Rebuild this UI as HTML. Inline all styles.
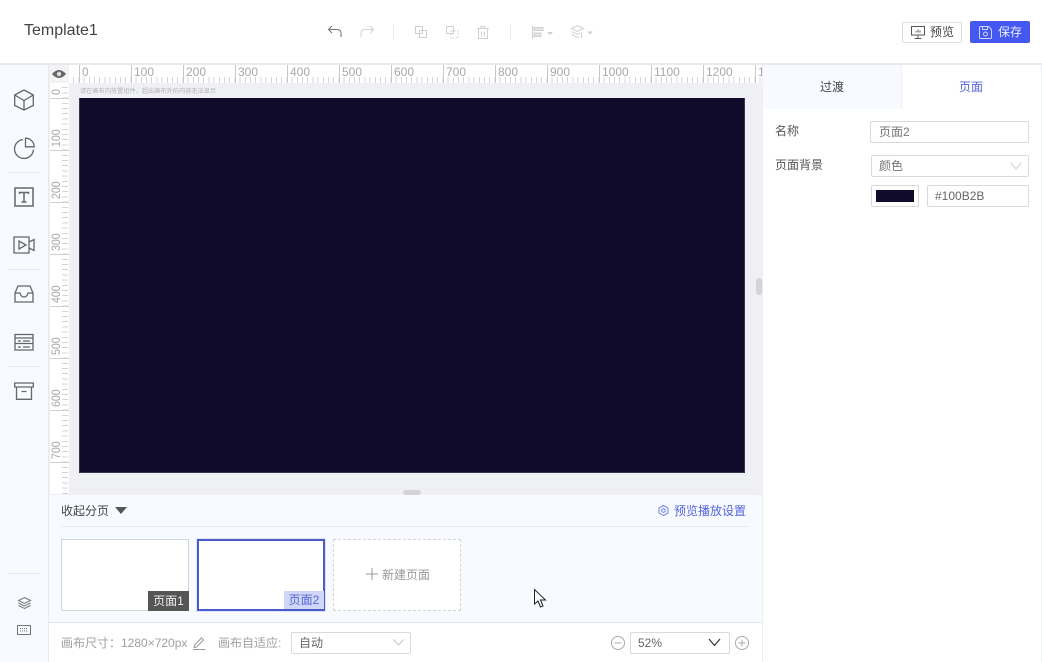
<!DOCTYPE html>
<html><head><meta charset="utf-8"><style>
*{box-sizing:border-box}
html,body{margin:0;padding:0;width:1042px;height:662px;overflow:hidden;background:#fff;font-family:"Liberation Sans","Noto Sans CJK SC",sans-serif;font-size:12px;color:#333}
.a{position:absolute}
.t{position:absolute;white-space:nowrap;line-height:16px}
svg{position:absolute;overflow:visible}
.box{position:absolute;background:#fff;border:1px solid #d9d9de;border-radius:2px}
.hl{position:absolute;left:8px;width:32px;height:1px;background:#e6e8ee}
.rh{position:absolute;top:0;font-size:12px;color:#a8a8a8;line-height:14px;padding-left:2px;height:18px;width:52px;border-left:1px solid #c8c8c8}
.rv{position:absolute;left:0;font-size:12px;color:#a8a8a8;line-height:12px;white-space:nowrap;transform-origin:0 0;transform:rotate(-90deg) scaleX(.88)}
.rvl{position:absolute;left:0;width:19px;height:1px;background:#d0d0d0}
</style></head><body>
<!-- header -->
<div class="a" style="left:0;top:0;width:1042px;height:65px;background:#fff;border-bottom:2px solid #e8e9ec"></div>
<div class="t" style="left:24px;top:22px;font-size:16px;line-height:18px;color:#444">Template1</div>
<svg style="left:327px;top:24px" width="16" height="16" fill="none" stroke="#777" stroke-width="1.100"><path d="M5 2 1.500 5.500 5 9M1.500 5.500H10Q14 5.500 14 9.500V13"/></svg>
<svg style="left:359px;top:24px" width="16" height="16" fill="none" stroke="#d4d4d4" stroke-width="1.100"><path d="M11 2 14.500 5.500 11 9M14.500 5.500H6Q2 5.500 2 9.500V13"/></svg>
<div class="a" style="left:393px;top:24px;width:1px;height:16px;background:#eeeeee"></div>
<svg style="left:415px;top:26px" width="12" height="12" fill="none" stroke="#cfcfcf"><path d="M.5.500h7v7h-7zM4.500 4.500h7v7h-7z"/></svg>
<svg style="left:446px;top:26px" width="13" height="13" fill="none" stroke="#cfcfcf"><path d="M.5.500h7v7h-7z"/><path d="M5 5h7v7H5z" stroke-dasharray="1.500 1.500"/></svg>
<svg style="left:477px;top:26px" width="12" height="13" fill="none" stroke="#cfcfcf"><path d="M0 2.500h12M4 2.500V.5h4v2M1.500 2.500v10h9v-10M4.500 5.500v5M7.500 5.500v5"/></svg>
<div class="a" style="left:510px;top:24px;width:1px;height:16px;background:#eeeeee"></div>
<svg style="left:532px;top:26px" width="22" height="14" fill="none" stroke="#d0d0d0"><path d="M.5 0v13"/><path d="M2 1.500h9v3H2zM2 7h7v3.500H2z" fill="#e4e4e4"/><path d="M15 6h6l-3 3z" fill="#cfcfcf" stroke="none"/></svg>
<svg style="left:571px;top:25px" width="22" height="15" fill="none" stroke="#d0d0d0"><path d="M6.500.5 12.500 3.500 6.500 6.500.5 3.500zM.5 6.500 6.500 9.500 9 8.500M.5 9.500 6.500 12.500 8 12M10.500 7v6"/><path d="M16 6.500h6l-3 3z" fill="#cfcfcf" stroke="none"/></svg>
<div class="box" style="left:902px;top:22px;width:60px;height:21px;border-color:#ddd"></div>
<svg style="left:911px;top:26px" width="15" height="13" fill="none" stroke="#555"><path d="M.5.500h13v8.500H.5zM7 9v3M3.500 12.500h7"/><path d="M5 6.500V5M7 6.500V3.500M9 6.500V4.500"/></svg>
<div class="t" style="left:930px;top:24px;color:#444">预览</div>
<div class="a" style="left:970px;top:21px;width:60px;height:22px;background:#4457f0;border-radius:2px"></div>
<svg style="left:979px;top:26px" width="13" height="13" fill="none" stroke="#cfd5ff"><path d="M1.500.5h8l3 3v8a1 1 0 0 1-1 1h-10a1 1 0 0 1-1-1v-10a1 1 0 0 1 1-1zM3.500.5v3h5v-3"/><circle cx="6.500" cy="8" r="2"/></svg>
<div class="t" style="left:998px;top:24px;color:#e8ebff">保存</div>

<!-- left sidebar -->
<div class="a" style="left:0;top:65px;width:49px;height:597px;background:#f7faff;border-right:1px solid #e8e9ee"></div>
<svg style="left:14px;top:89px" width="20" height="22" fill="none" stroke="#666" stroke-width="1.300"><path d="M10 1 19.300 6v10.500L10 21 .7 16.500V6zM.7 6 10 11.500 19.300 6M10 11.500V21"/></svg>
<svg style="left:14px;top:137px" width="21" height="21" fill="none" stroke="#666" stroke-width="1.300"><path d="M9 2.500A9.500 9.500 0 1 0 19.500 12.500"/><path d="M11.500 1.200V9.800H20.200A8.700 8.700 0 0 0 11.500 1.200z"/></svg>
<div class="hl" style="top:172px"></div>
<svg style="left:14px;top:187px" width="20" height="20" fill="none" stroke="#666" stroke-width="1.300"><path d="M1 1h18v18H1z" stroke-width="1.500"/><path d="M5.500 7V5.500h9V7M10 5.500V15M7.500 15h5" stroke-width="1.500"/></svg>
<svg style="left:13px;top:236px" width="22" height="18" fill="none" stroke="#666" stroke-width="1.300"><path d="M1 1h15v16H1zM16 6l5-2.500v11L16 12"/><path d="M6 5v8l7-4z"/></svg>
<div class="hl" style="top:269px"></div>
<svg style="left:14px;top:285px" width="20" height="18" fill="none" stroke="#666" stroke-width="1.300"><path d="M1 8 4 1h12l3 7v9H1zM1 8h5q1 4 4 4t4-4h5"/></svg>
<svg style="left:14px;top:333px" width="20" height="18" fill="none" stroke="#666" stroke-width="1.300"><path d="M1 5V1.500h18V5M1 5h18v5.500H1zM1 10.500h18V17H1zM4 8h3M9 8h7M4 14h3M9 14h7"/></svg>
<div class="hl" style="top:366px"></div>
<svg style="left:14px;top:382px" width="20" height="18" fill="none" stroke="#666" stroke-width="1.300"><path d="M.7 1h18.600v4H.7zM2.500 5V17.300h15V5M7.500 9.500h5"/></svg>
<div class="hl" style="top:573px"></div>
<svg style="left:18px;top:597px" width="13" height="13" fill="none" stroke="#777"><path d="M6.500.5 12.500 3.500 6.500 6.500.5 3.500zM.5 6 6.500 9 12.500 6M.5 8.500 6.500 11.500 12.500 8.500"/></svg>
<svg style="left:17px;top:625px" width="14" height="10" fill="none" stroke="#777"><path d="M.5.500h13v9H.5z"/><path d="M3 3.500h8M3 6h8" stroke-dasharray="1 1"/></svg>

<!-- canvas area -->
<div class="a" style="left:49px;top:65px;width:714px;height:430px;background:#eff0f4"></div>
<div class="a" style="left:49px;top:65px;width:20px;height:18px;background:#f3f3f5"></div>
<svg style="left:52px;top:69px" width="14" height="10"><path d="M0 5Q7-3 14 5 7 13 0 5z" fill="#666"/><circle cx="7" cy="5" r="2.200" fill="#ddd"/></svg>

<!-- horizontal ruler -->
<div class="a" style="left:69px;top:65px;width:693px;height:18px;background:#fff;overflow:hidden">
 <div class="a" style="left:0;top:12px;width:693px;height:6px;background:repeating-linear-gradient(90deg,transparent 0,transparent 4.200px,#d4d4d4 4.200px,#d4d4d4 5.200px)"></div>
 <div class="rh" style="left:10px">0</div><div class="rh" style="left:62px">100</div><div class="rh" style="left:114px">200</div><div class="rh" style="left:166px">300</div><div class="rh" style="left:218px">400</div><div class="rh" style="left:270px">500</div><div class="rh" style="left:322px">600</div><div class="rh" style="left:374px">700</div><div class="rh" style="left:426px">800</div><div class="rh" style="left:478px">900</div><div class="rh" style="left:530px">1000</div><div class="rh" style="left:582px">1100</div><div class="rh" style="left:634px">1200</div><div class="rh" style="left:686px">1300</div>
</div>
<!-- vertical ruler -->
<div class="a" style="left:50px;top:83px;width:19px;height:411px;background:#fff;overflow:hidden">
 <div class="a" style="left:12px;top:0;width:6px;height:411px;background:repeating-linear-gradient(180deg,transparent 0,transparent 4.200px,#d4d4d4 4.200px,#d4d4d4 5.200px)"></div>
 <div class="rvl" style="top:15px"></div><div class="rvl" style="top:67px"></div><div class="rvl" style="top:119px"></div><div class="rvl" style="top:171px"></div><div class="rvl" style="top:223px"></div><div class="rvl" style="top:275px"></div><div class="rvl" style="top:327px"></div><div class="rvl" style="top:379px"></div>
 <div class="rv" style="top:12px">0</div>
 <div class="rv" style="top:64px">100</div>
 <div class="rv" style="top:116px">200</div>
 <div class="rv" style="top:168px">300</div>
 <div class="rv" style="top:220px">400</div>
 <div class="rv" style="top:272px">500</div>
 <div class="rv" style="top:324px">600</div>
 <div class="rv" style="top:376px">700</div>
</div>
<div class="t" style="left:80px;top:87px;font-size:6.200px;line-height:9px;color:#b4b4b8">请在画布内放置组件，超出画布外的内容无法显示</div>
<div class="a" style="left:79px;top:98px;width:666px;height:375px;background:#100b2b;border:1px solid #3a3650;border-top:0"></div>
<div class="a" style="left:755px;top:83px;width:8px;height:412px;background:#f1f1f4"></div>
<div class="a" style="left:756px;top:278px;width:6px;height:17px;background:#d4d4d8;border-radius:3px"></div>
<div class="a" style="left:69px;top:489px;width:694px;height:6px;background:#f0f0f2"></div>
<div class="a" style="left:403px;top:490px;width:18px;height:5px;background:#d4d4d8;border-radius:3px"></div>

<!-- bottom panel -->
<div class="a" style="left:49px;top:495px;width:714px;height:128px;background:#f7faff;border-bottom:1px solid #e3e5ea"></div>
<div class="t" style="left:61px;top:503px;color:#444">收起分页</div>
<svg style="left:115px;top:507px" width="12" height="8"><path d="M0 0h12L6 7z" fill="#555"/></svg>
<svg style="left:658px;top:505px" width="11" height="11" fill="none" stroke="#6b7ae0"><path d="M5.500.5 10 3v5L5.500 10.500 1 8V3z"/><circle cx="5.500" cy="5.500" r="1.800"/></svg>
<div class="t" style="left:674px;top:503px;color:#5566d8">预览播放设置</div>
<div class="a" style="left:61px;top:526px;width:688px;height:1px;background:#e6e8ee"></div>
<div class="a" style="left:61px;top:539px;width:128px;height:72px;background:#fff;border:1px solid #d4d5da"></div>
<div class="t" style="left:148px;top:591px;width:41px;height:20px;background:#555;color:#eee;line-height:20px;text-align:center">页面1</div>
<div class="a" style="left:197px;top:539px;width:128px;height:72px;background:#fff;border:2px solid #4a5cc9;box-shadow:0 0 0 1px #dfe3fa"></div>
<div class="t" style="left:284px;top:591px;width:40px;height:18px;background:#d0d6f7;color:#5566d8;line-height:18px;text-align:center">页面2</div>
<div class="a" style="left:333px;top:539px;width:128px;height:72px;background:#fff;border:1px dashed #d4d4d8"></div>
<svg style="left:366px;top:568px" width="12" height="12" fill="none" stroke="#999"><path d="M6 0v12M0 6h12"/></svg>
<div class="t" style="left:382px;top:567px;color:#999">新建页面</div>
<svg style="left:534px;top:589px" width="13" height="20"><path d="M.5.500V15L4 12l2.500 6 2.500-1-2.500-6H11.500z" fill="#fff" stroke="#222"/></svg>

<!-- footer -->
<div class="t" style="left:61px;top:635px;color:#a0a0a0">画布尺寸：1280×720px</div>
<svg style="left:193px;top:636px" width="13" height="14" fill="none" stroke="#999"><path d="M1.500 9 8.500 2l2 2-7 7-2.500.5zM0 13.500h12.500"/></svg>
<div class="t" style="left:218px;top:635px;color:#a0a0a0">画布自适应:</div>
<div class="box" style="left:291px;top:632px;width:120px;height:22px"></div>
<div class="t" style="left:299px;top:635px;color:#666">自动</div>
<svg style="left:393px;top:639px" width="11" height="7" fill="none" stroke="#c4c4c4"><path d="M.5.500 5.500 6 10.500.5"/></svg>
<svg style="left:611px;top:636px" width="14" height="14" fill="none" stroke="#aaa"><circle cx="7" cy="7" r="6.500"/><path d="M3.500 7h7"/></svg>
<div class="box" style="left:630px;top:632px;width:100px;height:22px"></div>
<div class="t" style="left:638px;top:635px;color:#666">52%</div>
<svg style="left:708px;top:638px" width="13" height="9" fill="none" stroke="#333" stroke-width="1.200"><path d="M1 1 6.500 7.500 12 1"/></svg>
<svg style="left:735px;top:636px" width="14" height="14" fill="none" stroke="#aaa"><circle cx="7" cy="7" r="6.500"/><path d="M3.500 7h7M7 3.500v7"/></svg>

<!-- right panel -->
<div class="a" style="left:763px;top:65px;width:278px;height:597px;background:#fff"></div>
<div class="a" style="left:1041px;top:65px;width:1px;height:597px;background:#eceef2"></div>
<div class="a" style="left:762px;top:65px;width:1px;height:597px;background:#eceef2"></div>
<div class="a" style="left:763px;top:65px;width:138px;height:44px;background:#f7faff"></div>
<div class="a" style="left:901px;top:65px;width:1px;height:44px;background:#eef0f5"></div>
<div class="t" style="left:820px;top:79px;color:#444">过渡</div>
<div class="t" style="left:959px;top:79px;color:#5566d8">页面</div>
<div class="t" style="left:775px;top:123px;color:#555">名称</div>
<div class="box" style="left:870px;top:121px;width:159px;height:22px"></div>
<div class="t" style="left:879px;top:124px;color:#777">页面2</div>
<div class="t" style="left:775px;top:157px;color:#555">页面背景</div>
<div class="box" style="left:871px;top:155px;width:158px;height:22px"></div>
<div class="t" style="left:879px;top:158px;color:#777">颜色</div>
<svg style="left:1010px;top:162px" width="12" height="8" fill="none" stroke="#d0d0d0"><path d="M.5.500 6 7 11.500.5"/></svg>
<div class="box" style="left:871px;top:185px;width:48px;height:22px"></div>
<div class="a" style="left:876px;top:190px;width:38px;height:12px;background:#100b2b"></div>
<div class="box" style="left:927px;top:185px;width:102px;height:22px"></div>
<div class="t" style="left:935px;top:188px;color:#666">#100B2B</div>
</body></html>
